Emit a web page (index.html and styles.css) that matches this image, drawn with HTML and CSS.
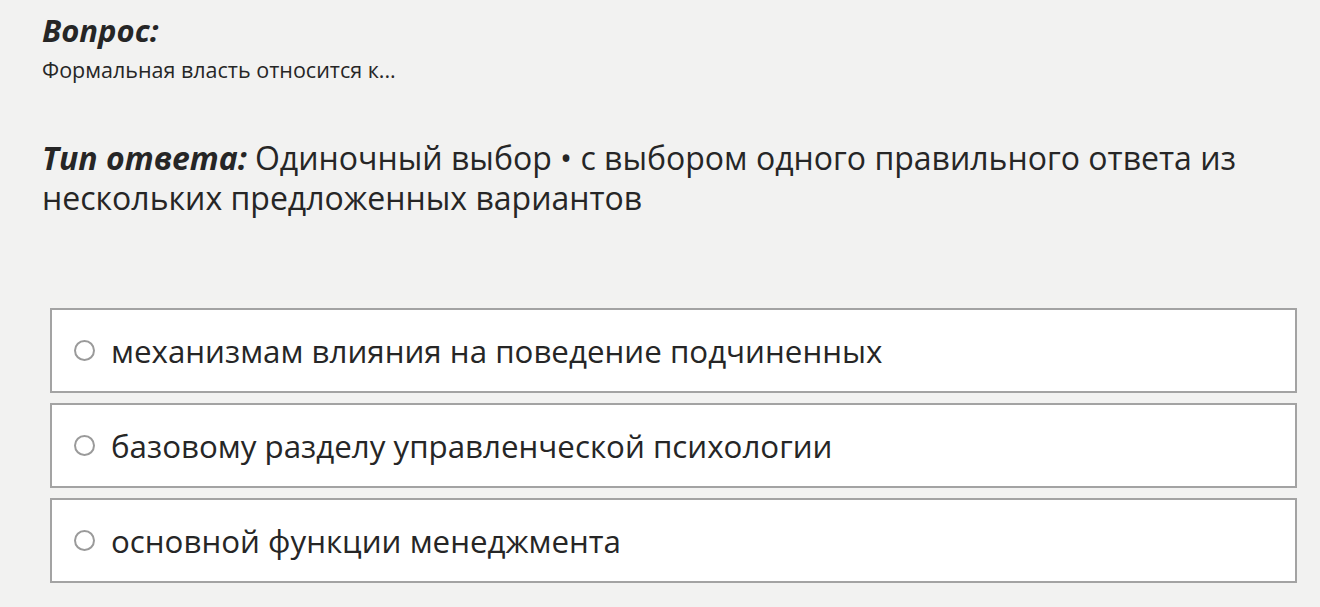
FILE: index.html
```html
<!DOCTYPE html>
<html lang="ru">
<head>
    <meta charset="UTF-8">
    <title>Вопрос</title>
    <link rel="stylesheet" href="styles.css">
</head>
<body>
    <div class="quiz">
        <div class="question">
            <h2 class="label">Вопрос:</h2>
            <p class="question-text">Формальная власть относится к...</p>
        </div>

        <p class="answer-type"><b>Тип ответа:</b>Одиночный выбор • с выбором одного правильного ответа из нескольких предложенных вариантов</p>

        <!-- Options -->
        <div class="options">
            <label class="option"><span class="radio"></span>механизмам влияния на поведение подчиненных</label>
            <label class="option"><span class="radio"></span>базовому разделу управленческой психологии</label>
            <label class="option"><span class="radio"></span>основной функции менеджмента</label>
        </div>
    </div>
</body>
</html>
```
FILE: styles.css
```css
* {
    margin: 0;
    padding: 0;
    box-sizing: border-box;
}

body {
    background-color: #f2f2f1;
    font-family: "Open Sans", "Noto Sans", sans-serif;
    color: #262626;
}

.quiz {
    padding: 12px 23px 0 42px;
}

.label {
    font-size: 31px;
    font-weight: 700;
    font-style: italic;
    line-height: 36px;
}

.question-text {
    font-size: 21.5px;
    line-height: 26px;
    margin-top: 9px;
}

.answer-type {
    margin-top: 55px;
    font-size: 32px;
    line-height: 40px;
    padding-right: 40px;
}

.answer-type b {
    font-style: italic;
    margin-right: 8px;
}

.options {
    margin-top: 90px;
    margin-left: 8px;
    display: flex;
    flex-direction: column;
    gap: 10px;
}

.option {
    display: flex;
    align-items: center;
    height: 85px;
    background: #fff;
    border: 2px solid #a3a3a3;
    padding-left: 22px;
    font-size: 31.3px;
}

.radio {
    width: 21px;
    height: 21px;
    border: 2px solid #9a9a9a;
    border-radius: 50%;
    margin-right: 16px;
    flex-shrink: 0;
}
```
